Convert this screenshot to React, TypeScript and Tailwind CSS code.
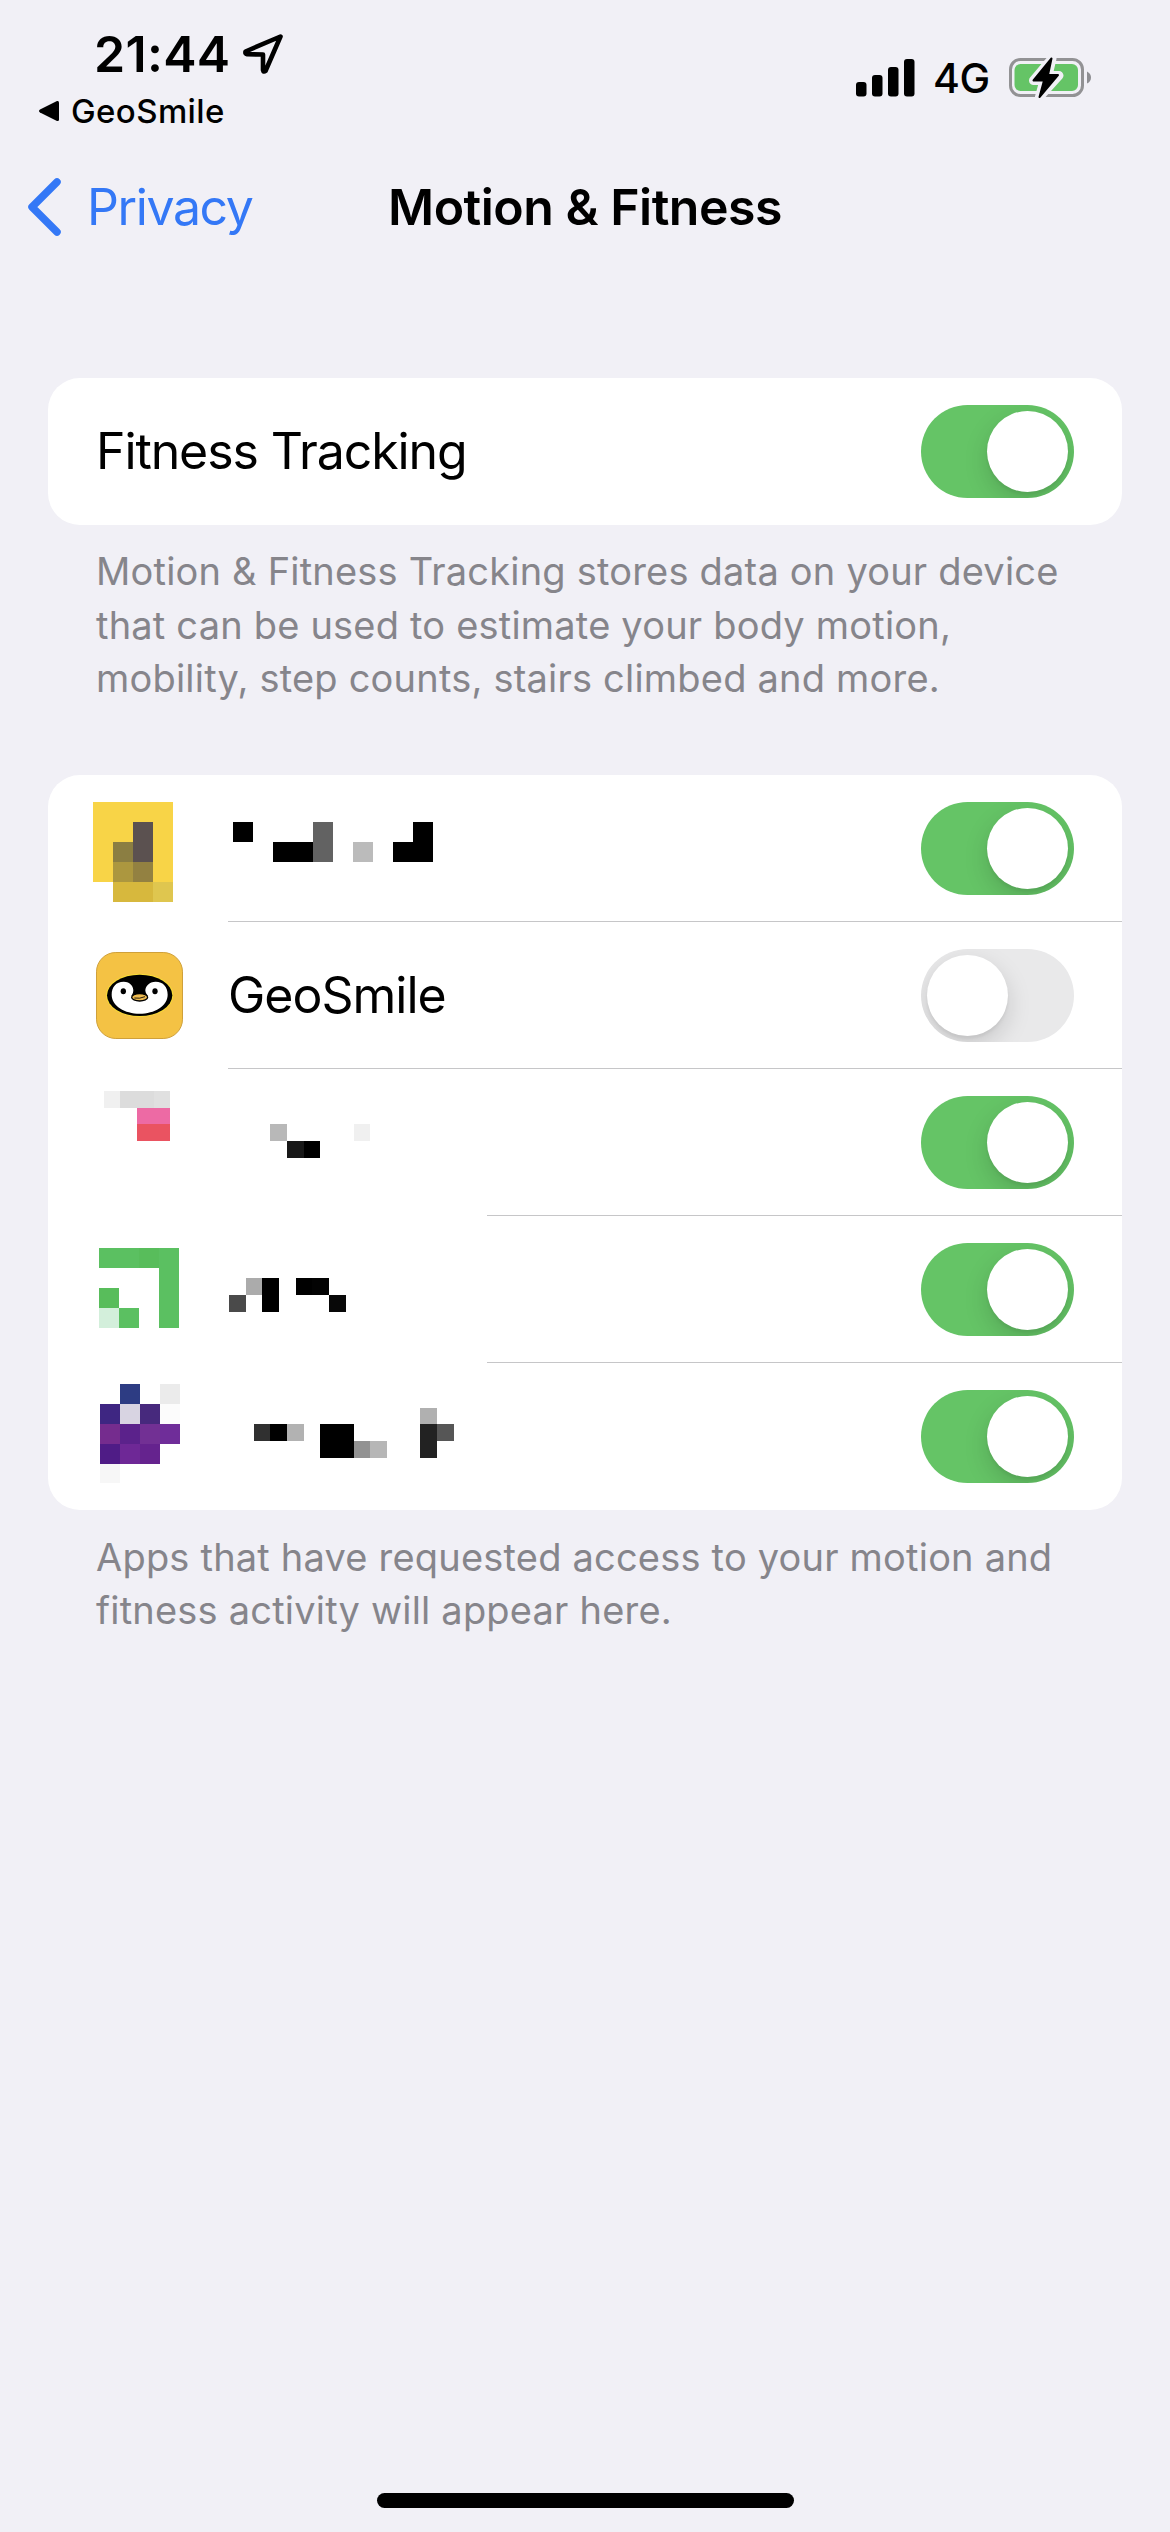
import { useState } from 'react';

type Cell = [x: number, y: number, w: number, h: number, color: string];

const APPS: { id: string; name?: string; on: boolean; divider: string; icon?: Cell[]; label?: Cell[] }[] = [
  {
    id: 'yellow',
    on: true,
    divider: 'ml-[180px]',
    icon: [
      [3, 27, 80, 80, '#f8d447'], [43, 47, 20, 40, '#5b5150'], [23, 67, 20, 20, '#8b7e42'],
      [23, 87, 20, 20, '#ac973f'], [43, 87, 20, 20, '#938141'], [23, 107, 40, 20, '#d7b83d'],
      [63, 107, 20, 20, '#dfc64f'],
    ],
    label: [
      [5, 47, 20, 20, '#000'], [45, 67, 40, 20, '#000'], [85, 47, 20, 40, '#626262'],
      [125, 67, 20, 20, '#bbb'], [165, 67, 40, 20, '#000'], [185, 47, 20, 20, '#000'],
    ],
  },
  { id: 'geosmile', name: 'GeoSmile', on: false, divider: 'ml-[180px]' },
  {
    id: 'pink',
    on: true,
    divider: 'ml-[439px]',
    icon: [
      [14, 22, 16, 17, '#f0f0f0'], [30, 22, 34, 17, '#dcdcdc'], [64, 22, 16, 17, '#e0e0e0'],
      [47, 39, 33, 16, '#ed6aa4'], [47, 55, 33, 17, '#ea5361'],
    ],
    label: [
      [42, 55, 17, 17, '#b8b8b8'], [59, 72, 17, 17, '#181818'], [76, 72, 16, 17, '#000'],
      [126, 55, 16, 17, '#f0f0f0'],
    ],
  },
  {
    id: 'green',
    on: true,
    divider: 'ml-[439px]',
    icon: [
      [9, 32, 80, 20, '#5bc061'], [49, 32, 20, 20, '#58bd5b'], [69, 52, 20, 60, '#5bc061'],
      [9, 72, 20, 20, '#58bd5b'], [9, 92, 20, 20, '#d3efdb'], [29, 92, 20, 20, '#5bc061'],
    ],
    label: [
      [1, 79, 17, 17, '#4a4a4a'], [18, 62, 16, 17, '#ababab'], [34, 62, 17, 34, '#000'],
      [68, 62, 16, 17, '#000'], [84, 62, 17, 17, '#030303'], [101, 79, 17, 17, '#080808'],
    ],
  },
  {
    id: 'purple',
    on: true,
    divider: 'hidden',
    icon: [
      [30, 21, 20, 20, '#2d3c83'], [70, 21, 20, 20, '#ebebeb'],
      [10, 41, 20, 20, '#3e2682'], [30, 41, 20, 20, '#d8d4e2'], [50, 41, 20, 20, '#47297d'], [70, 41, 20, 20, '#fcfcfc'],
      [10, 61, 20, 20, '#752c8e'], [30, 61, 20, 20, '#5b228b'], [50, 61, 20, 20, '#723094'], [70, 61, 20, 20, '#6f2d99'],
      [10, 81, 20, 20, '#4f1c86'], [30, 81, 20, 20, '#6e2896'], [50, 81, 20, 20, '#65238e'],
      [10, 101, 20, 19, '#f7f7f7'],
    ],
    label: [
      [26, 61, 16, 17, '#303030'], [42, 61, 17, 17, '#000'], [59, 61, 17, 17, '#b2b2b2'],
      [92, 61, 34, 34, '#000'], [126, 78, 16, 17, '#929292'], [142, 78, 17, 17, '#b6b6b6'],
      [192, 45, 17, 16, '#b0b0b0'], [192, 61, 17, 34, '#222'], [209, 61, 17, 17, '#565656'],
    ],
  },
];

function Mosaic({ cells, width }: { cells: Cell[]; width: number }) {
  return (
    <svg width={width} height="147" viewBox={`0 0 ${width} 147`} shapeRendering="crispEdges" className="shrink-0">
      {cells.map(([x, y, w, h, color], i) => (
        <rect key={i} x={x} y={y} width={w} height={h} fill={color} />
      ))}
    </svg>
  );
}

function PenguinIcon() {
  return (
    <svg width="87" height="87" viewBox="0 0 261 261" className="ml-[6px] mr-[3px] shrink-0">
      <rect x="1.5" y="1.5" width="258" height="258" rx="58" fill="#f4c244" stroke="#cfa03a" strokeWidth="3" />
      <ellipse cx="131" cy="130" rx="101" ry="65" fill="#f9dc35" />
      <ellipse cx="131" cy="130" rx="98" ry="62" />
      <path
        fill="#fff"
        d="M47 128C47 105 60 89 83 89C103 89 112 103 112 116Q112 124 106 132L131 142L156 132Q148 124 148 116C148 103 159 89 179 89C202 89 215 105 215 128C215 162 175 185 131 185C87 185 47 162 47 128Z"
      />
      <ellipse cx="82" cy="118" rx="8" ry="9" />
      <ellipse cx="177" cy="118" rx="8" ry="9" />
      <ellipse cx="131" cy="136" rx="24" ry="11" fill="#eebb50" stroke="#000" strokeWidth="4" />
      <path d="M115 138Q131 141 147 134" fill="none" stroke="#000" strokeWidth="2.500" />
    </svg>
  );
}

function Toggle({ defaultOn }: { defaultOn: boolean }) {
  const [on, setOn] = useState(defaultOn);
  return (
    <button
      role="switch"
      aria-checked={on}
      onClick={() => setOn(!on)}
      className={`flex h-[93px] w-[153px] shrink-0 items-center overflow-hidden rounded-full px-[6px] ${
        on ? 'justify-end bg-[#65c466]' : 'justify-start bg-[#e9e9ea]'
      }`}
    >
      <span className="size-[81px] rounded-full bg-white shadow-[0_9px_24px_rgba(0,0,0,0.15),0_3px_3px_rgba(0,0,0,0.05)]" />
    </button>
  );
}

function StatusBar() {
  return (
    <header className="flex h-[141px] justify-between">
      <div className="pt-[24px]">
        <div className="flex h-[60px] items-center pl-[94px]">
          <span className="text-[50px] leading-[60px] font-semibold tracking-[0.3px]">21:44</span>
          <svg width="42" height="42" viewBox="0 0 42 42" className="ml-[12px]" fill="none" stroke="#000" strokeWidth="4.6" strokeLinejoin="round">
            <path d="M38.500 3.500L3.500 18.500Q3 21 5 21.300L21 21.500V37Q21.500 39.500 23.500 38Z" />
          </svg>
        </div>
        <div className="flex h-[54px] items-center pl-[38px]">
          <svg width="22" height="22" viewBox="0 0 22 22">
            <path d="M2 9.500L19 1Q21 0.500 21 2.500V19.500Q21 21.500 19 21L2 12.500Q0 11 2 9.500Z" />
          </svg>
          <span className="pl-[11px] text-[33px] leading-[54px] font-medium tracking-[0.4px]">GeoSmile</span>
        </div>
      </div>
      <div className="flex h-[42px] items-center pt-[57px] pr-[78px] box-content">
        <svg width="59" height="38" viewBox="0 0 59 38">
          <rect x="0" y="23" width="10.500" height="14.500" rx="3" />
          <rect x="16" y="16" width="10.500" height="21.500" rx="3" />
          <rect x="32" y="8" width="10.500" height="29.500" rx="3" />
          <rect x="48" y="0" width="10.500" height="37.500" rx="3" />
        </svg>
        <span className="w-[76px] pl-[18px] text-[41px] leading-[42px] font-medium tracking-[-0.5px]">4G</span>
        <svg width="84" height="42" viewBox="0 0 84 42" className="ml-[17px]">
          <rect x="2.500" y="2.500" width="72" height="36" rx="10" fill="none" stroke="#929294" strokeWidth="3" />
          <rect x="6.500" y="7" width="63.500" height="27" rx="6" fill="#65c466" />
          <path d="M79 14.500Q83 16.500 83 20.500Q83 24.500 79 26.500Z" fill="#8e8e92" />
          <path
            d="M44 1.500L25.500 23.500H36L31.500 40L51 18.500H40Z"
            stroke="#f1f0f6"
            strokeWidth="9"
            strokeLinejoin="round"
          />
          <path d="M43.500 1.500L25.500 23.500H36L31.500 40L50 18H40Z" stroke="#000" strokeWidth="2" strokeLinejoin="round" />
        </svg>
      </div>
    </header>
  );
}

export default function App() {
  return (
    <div className="flex h-[2532px] w-[1170px] flex-col overflow-hidden bg-[#f1f0f6] font-[Inter,sans-serif] text-black">
      <StatusBar />

      {/* Navigation bar */}
      <nav className="grid h-[132px] grid-cols-[1fr_auto_1fr] items-center">
        <a className="flex items-center pl-[26px] text-[#3478f6]">
          <svg width="38" height="60" viewBox="0 0 38 60" fill="none" stroke="currentColor" strokeWidth="7.500" strokeLinecap="round" strokeLinejoin="round">
            <path d="M31 5L6 30L31 55" />
          </svg>
          <span className="pl-[23px] text-[50px] leading-[60px] tracking-[-1.4px]">Privacy</span>
        </a>
        <h1 className="text-[50px] leading-[60px] font-semibold tracking-[-0.5px]">Motion &amp; Fitness</h1>
      </nav>

      <main className="px-[48px] pt-[105px]">
        <section className="flex h-[147px] items-center justify-between rounded-[32px] bg-white px-[48px]">
          <span className="mb-[2px] text-[50px] leading-[60px] tracking-[-1.1px]">Fitness Tracking</span>
          <Toggle defaultOn />
        </section>
        <p className="px-[48px] pt-[20px] text-[38px] leading-[53.500px] tracking-[0.2px] whitespace-nowrap text-[#86858b]">
          Motion &amp; Fitness Tracking stores data on your device
          <br />
          that can be used to estimate your body motion,
          <br />
          mobility, step counts, stairs climbed and more.
        </p>

        {/* Apps with motion access */}
        <ul className="mt-[69.500px] overflow-hidden rounded-[32px] bg-white">
          {APPS.map(app => (
            <li key={app.id} className="flex h-[147px] flex-col">
              <div className="-mb-px flex h-[147px] shrink-0 items-center pr-[48px] pl-[42px]">
                {app.icon ? <Mosaic cells={app.icon} width={96} /> : <PenguinIcon />}
                <div className="flex-1 pl-[42px]">
                  {app.label ? (
                    <Mosaic cells={app.label} width={260} />
                  ) : (
                    <div className="mb-[2px] text-[50px] leading-[60px] tracking-[-1px]">{app.name}</div>
                  )}
                </div>
                <Toggle defaultOn={app.on} />
              </div>
              <div className={`h-px shrink-0 bg-[#c6c6c8] ${app.divider}`} />
            </li>
          ))}
        </ul>
        <p className="px-[48px] pt-[20.500px] text-[38px] leading-[53px] tracking-[0.2px] whitespace-nowrap text-[#86858b]">
          Apps that have requested access to your motion and
          <br />
          fitness activity will appear here.
        </p>
      </main>

      {/* Home indicator */}
      <div className="mx-auto mt-auto mb-[24px] h-[15px] w-[417px] rounded-full bg-black" />
    </div>
  );
}
